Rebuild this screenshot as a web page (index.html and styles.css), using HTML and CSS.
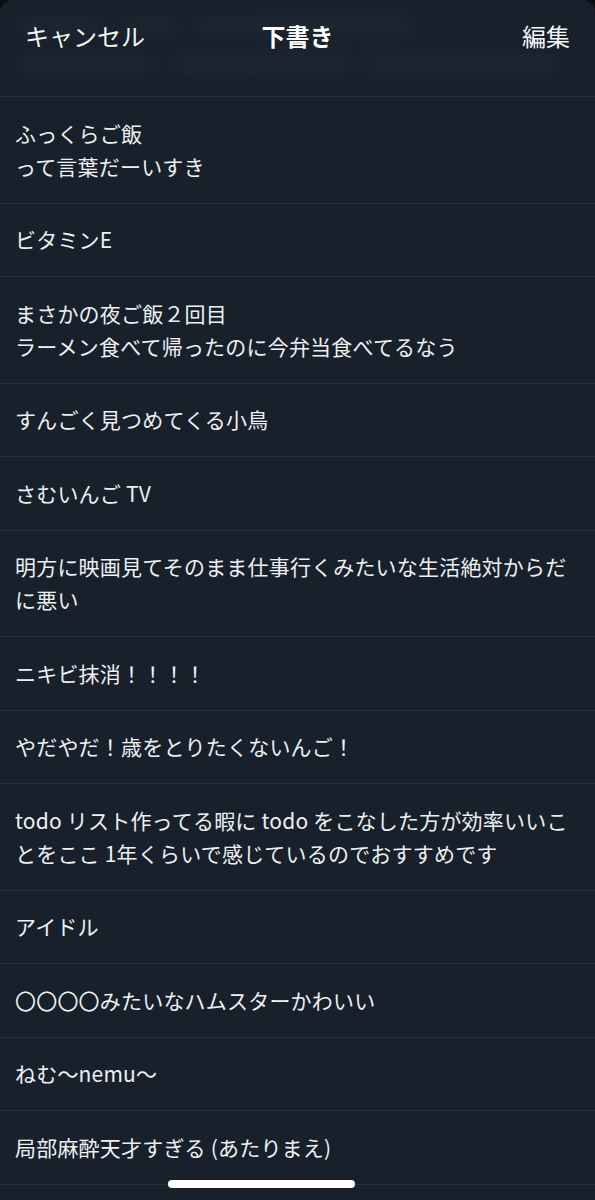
FILE: index.html
```html
<!DOCTYPE html>
<html lang="ja">
<head>
<meta charset="utf-8">
<title>下書き</title>
<link rel="stylesheet" href="styles.css">
</head>
<body>
<div class="sheet">
  <header class="header">
    <div class="ghost" aria-hidden="true">
      <div class="ghost-row"><i class="blob w1"></i><i class="blob w2"></i><i class="blob w3"></i></div>
      <div class="ghost-row"><i class="blob w4"></i><i class="blob w5"></i><i class="blob w6"></i></div>
    </div>
    <nav class="nav">
      <span class="nav-btn">キャンセル</span>
      <span class="nav-title">下書き</span>
      <span class="nav-btn">編集</span>
    </nav>
  </header>
  <ul class="drafts">
    <li class="draft">ふっくらご飯<br>って言葉だーいすき</li>
    <li class="draft">ビタミンE</li>
    <li class="draft">まさかの夜ご飯２回目<br>ラーメン食べて帰ったのに今弁当食べてるなう</li>
    <li class="draft">すんごく見つめてくる小鳥</li>
    <li class="draft">さむいんご TV</li>
    <li class="draft">明方に映画見てそのまま仕事行くみたいな生活絶対からだに悪い</li>
    <li class="draft">ニキビ抹消！！！！</li>
    <li class="draft">やだやだ！歳をとりたくないんご！</li>
    <li class="draft">todo リスト作ってる暇に todo をこなした方が効率いいことをここ 1年くらいで感じているのでおすすめです</li>
    <li class="draft">アイドル</li>
    <li class="draft">〇〇〇〇みたいなハムスターかわいい</li>
    <li class="draft">ねむ〜nemu〜</li>
    <li class="draft">局部麻酔天才すぎる (あたりまえ)</li>
  </ul>
</div>
<span class="home-indicator"></span>
</body>
</html>
```

FILE: styles.css
```css
* { box-sizing: border-box; }
html, body {
  margin: 0;
  padding: 0;
  background: #0b0f14;
}
body {
  font-family: "Noto Sans CJK JP", "Noto Sans", sans-serif;
  color: #f2f4f6;
  height: 1200px;
  overflow: hidden;
  position: relative;
}
.sheet {
  background: #17202b;
  border-radius: 13px 13px 0 0;
  height: 1200px;
  overflow: hidden;
  display: flex;
  flex-direction: column;
}
.header {
  display: grid;
  height: 97px;
  border-bottom: 1px solid #28323d;
  flex: none;
}
.ghost, .nav { grid-area: 1 / 1; }
.ghost {
  display: flex;
  flex-direction: column;
  gap: 22px;
  padding: 18px 20px 0 16px;
  filter: blur(9px);
  opacity: 0.035;
  overflow: hidden;
}
.ghost-row {
  display: flex;
  gap: 14px;
}
.blob {
  display: block;
  height: 16px;
  border-radius: 8px;
  background: #ffffff;
}
.w1 { width: 90px; }
.w2 { width: 60px; }
.w3 { width: 220px; }
.w4 { width: 140px; }
.w5 { width: 180px; }
.w6 { width: 200px; }
.nav {
  display: flex;
  align-items: flex-start;
  justify-content: space-between;
  padding: 18px 25px 0 25px;
  font-size: 24px;
  line-height: 36px;
}
.nav-btn {
  color: #f4f5f7;
  width: 130px;
}
.nav-btn:last-child { text-align: right; }
.nav-title {
  font-weight: 700;
  color: #ffffff;
}
.drafts {
  list-style: none;
  margin: 0;
  padding: 0;
  flex: none;
}
.draft {
  font-size: 21px;
  line-height: 33px;
  padding: 19.75px 16px 19.75px 15px;
  border-bottom: 1px solid #28323d;
  color: #eef0f2;
  letter-spacing: 0.2px;
}
.home-indicator {
  position: absolute;
  top: 1180px;
  left: 168px;
  width: 187px;
  height: 8px;
  border-radius: 4px;
  background: #ffffff;
}
```
